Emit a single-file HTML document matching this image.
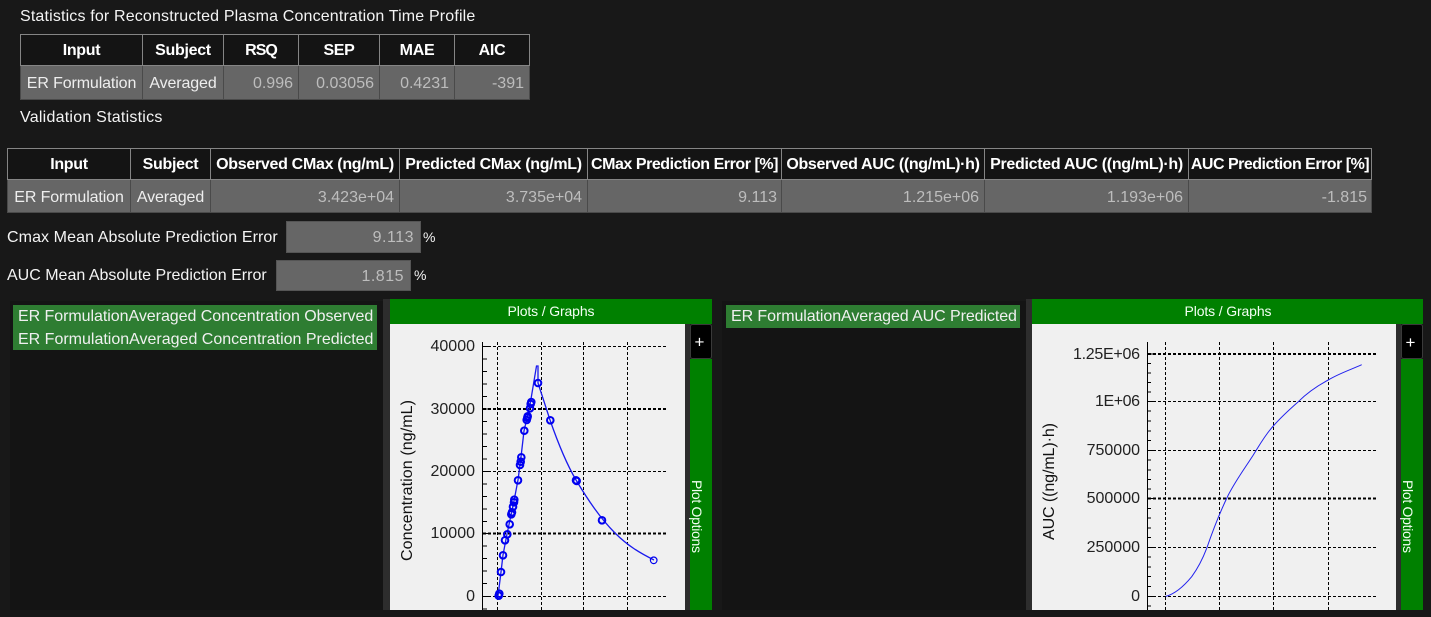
<!DOCTYPE html>
<html><head><meta charset="utf-8"><title>Statistics</title>
<style>
html,body{margin:0;padding:0;background:#181818;}
body{width:1431px;height:617px;position:relative;overflow:hidden;font-family:"Liberation Sans",sans-serif;font-size:16px;color:#f4f4f4;}
.l{position:absolute;white-space:nowrap;line-height:20px;}
table{position:absolute;border-collapse:separate;border-spacing:0;table-layout:fixed;}
th{background:#141414;color:#fff;font-weight:bold;border:1px solid #858585;border-left:0;padding:2px 0 0;box-sizing:border-box;height:32px;text-align:center;font-size:16px;letter-spacing:-.3px;white-space:nowrap;overflow:hidden;}
th:first-child{border-left:1px solid #858585;}
td{background:#666;border:1px solid #4a4a4a;border-top:0;border-left:0;padding:3px 5px 0 2px;box-sizing:border-box;text-align:right;color:#bdbdbd;font-size:16px;white-space:nowrap;overflow:hidden;}
td.t{text-align:center;color:#eee;padding:3px 0 0;letter-spacing:-.12px;}
td:first-child{border-left:1px solid #4a4a4a;}
.in{position:absolute;background:#666;border:1px solid #555;box-sizing:border-box;text-align:right;color:#bdbdbd;padding-right:6px;line-height:31px;letter-spacing:.5px;}
.sb{position:absolute;background:#141414;}
.strip{position:absolute;background:#2d2d2d;}
.li{position:absolute;background:#2e7d32;color:#f0f0f0;white-space:nowrap;padding-left:5px;line-height:24px;box-sizing:border-box;}
svg{position:absolute;left:0;top:0;}
</style></head><body>
<div class="l" style="left:20px;top:7px;letter-spacing:.16px;">Statistics for Reconstructed Plasma Concentration Time Profile</div>
<table style="left:20px;top:34px;width:510px;">
<colgroup><col style="width:123px"><col style="width:81px"><col style="width:75px"><col style="width:81px"><col style="width:75px"><col style="width:75px"></colgroup>
<tr><th>Input</th><th>Subject</th><th style="letter-spacing:-1px">RSQ</th><th>SEP</th><th>MAE</th><th>AIC</th></tr>
<tr style="height:34px"><td class="t">ER Formulation</td><td class="t">Averaged</td><td>0.996</td><td>0.03056</td><td>0.4231</td><td>-391</td></tr>
</table>
<div class="l" style="left:20px;top:108px;letter-spacing:.24px;">Validation Statistics</div>
<table style="left:7px;top:148px;width:1365px;">
<colgroup><col style="width:124px"><col style="width:80px"><col style="width:189px"><col style="width:188px"><col style="width:194px"><col style="width:203px"><col style="width:204px"><col style="width:183px"></colgroup>
<tr><th>Input</th><th>Subject</th><th>Observed CMax (ng/mL)</th><th>Predicted CMax (ng/mL)</th><th style="letter-spacing:-.45px">CMax Prediction Error [%]</th><th style="letter-spacing:-.33px">Observed AUC ((ng/mL)·h)</th><th>Predicted AUC ((ng/mL)·h)</th><th style="letter-spacing:-.5px">AUC Prediction Error [%]</th></tr>
<tr style="height:33px"><td class="t">ER Formulation</td><td class="t">Averaged</td><td>3.423e+04</td><td>3.735e+04</td><td style="padding-right:4px">9.113</td><td>1.215e+06</td><td>1.193e+06</td><td style="padding-right:4px">-1.815</td></tr>
</table>
<div class="l" style="left:7px;top:228px;letter-spacing:.09px;">Cmax Mean Absolute Prediction Error</div>
<div class="in" style="left:286px;top:221px;width:135px;height:32px;">9.113</div>
<div class="l" style="left:423px;top:227px;font-size:14px;">%</div>
<div class="l" style="left:7px;top:266px;">AUC Mean Absolute Prediction Error</div>
<div class="in" style="left:276px;top:260px;width:135px;height:31px;">1.815</div>
<div class="l" style="left:414px;top:265px;font-size:14px;">%</div>

<div class="sb" style="left:10px;top:301px;width:373px;height:309px;"></div>
<div class="strip" style="left:383px;top:299px;width:7px;height:311px;"></div>
<div class="li" style="left:13px;top:305px;width:364px;height:23px;letter-spacing:-.045px;">ER FormulationAveraged Concentration Observed</div>
<div class="li" style="left:13px;top:328px;width:364px;height:22px;">ER FormulationAveraged Concentration Predicted</div>
<div class="sb" style="left:722px;top:301px;width:304px;height:309px;"></div>
<div class="strip" style="left:1026px;top:299px;width:6px;height:311px;"></div>
<div class="li" style="left:726px;top:305px;width:294px;height:23px;letter-spacing:-.08px;">ER FormulationAveraged AUC Predicted</div>

<svg width="1431" height="617" viewBox="0 0 1431 617" font-family="'Liberation Sans',sans-serif">
<!-- left plot -->
<rect x="390" y="299" width="322" height="25" fill="#008000"/>
<rect x="390" y="324" width="295" height="286" fill="#f0f0f0"/>
<rect x="685" y="324" width="5" height="286" fill="#2d2d2d"/>
<rect x="690" y="359" width="22" height="251" fill="#008000"/>
<rect x="690.5" y="324.5" width="21" height="34" rx="2" fill="#000" stroke="#3a3a3a"/>
<text x="551" y="316" fill="#f2fff2" font-size="14" text-anchor="middle" textLength="87">Plots / Graphs</text>
<text x="699.5" y="347.5" fill="#fff" font-size="17" text-anchor="middle">+</text>
<text transform="translate(692,480) rotate(90)" fill="#f2fff2" font-size="14" textLength="73">Plot Options</text>
<g stroke="#000" stroke-width="1" stroke-dasharray="3 2" fill="none">
<path d="M497.5 342V610M541.5 342V610M583.5 342V610M627.5 342V610M483 346.5H668M483 471.5H668M483 596.5H668"/>
<path stroke-width="2" d="M483 409H668M483 533.5H668"/>
</g>
<path stroke="#000" fill="none" d="M482.5 342V610M483 346.5h5M483 359h4M483 371.5h4M483 384h4M483 396.5h4M483 409h5M483 421.5h4M483 434h4M483 446.5h4M483 459h4M483 471.5h5M483 484h4M483 496.5h4M483 509h4M483 521.5h4M483 533.5h5M483 546h4M483 558.5h4M483 571h4M483 583.5h4M483 596.5h5M483 609h4"/>
<g fill="#222" font-size="16" text-anchor="end">
<text x="475" y="351">40000</text><text x="475" y="414">30000</text><text x="475" y="476">20000</text><text x="475" y="538">10000</text><text x="475" y="601">0</text>
</g>
<text transform="translate(412,561) rotate(-90)" fill="#111" font-size="16" textLength="161">Concentration (ng/mL)</text>
<path fill="none" stroke="#1a1aee" stroke-width="1.3" d="M498 596L501 572L503 555L507 534L514 501L518 480L521 457L524 431L530 405L536.5 366L538 366L538 383L550 420C558 443 566 463 576 480C588 500 600 518 615 533C628 546 640 553 654 560"/>
<g fill="none" stroke="#0000f0" stroke-width="2">
<circle cx="498.7" cy="595.7" r="3.3"/><circle cx="499.3" cy="593.7" r="3.3"/><circle cx="501" cy="572" r="3.3"/><circle cx="503" cy="555.3" r="3.3"/><circle cx="505" cy="540.3" r="3.3"/><circle cx="507.3" cy="534.3" r="3.3"/><circle cx="509.7" cy="524.3" r="3.3"/><circle cx="511.3" cy="514.3" r="3.3"/><circle cx="512" cy="512.3" r="3.3"/><circle cx="513" cy="506.7" r="3.3"/><circle cx="514" cy="502.3" r="3.3"/><circle cx="514.3" cy="499.7" r="3.3"/><circle cx="518" cy="480.3" r="3.3"/><circle cx="520" cy="465" r="3.3"/><circle cx="520.7" cy="461.7" r="3.3"/><circle cx="521.3" cy="457.3" r="3.3"/><circle cx="524.3" cy="430.7" r="3.3"/><circle cx="526.7" cy="420" r="3.3"/><circle cx="527.3" cy="417.7" r="3.3"/><circle cx="527.7" cy="416.3" r="3.3"/><circle cx="530" cy="408.3" r="3.3"/><circle cx="530.7" cy="404" r="3.3"/><circle cx="531.3" cy="402" r="3.3"/><circle cx="538" cy="383" r="3.3"/><circle cx="550.3" cy="420.3" r="3.3"/><circle cx="576" cy="480.3" r="3.3"/><circle cx="576.7" cy="481" r="3.3"/><circle cx="602" cy="520.3" r="3.3"/>
</g>
<circle cx="653.7" cy="560.3" r="3.3" fill="none" stroke="#0000f0" stroke-width="1.2"/>
<!-- right plot -->
<rect x="1032" y="299" width="391" height="25" fill="#008000"/>
<rect x="1032" y="324" width="364" height="286" fill="#f0f0f0"/>
<rect x="1396" y="324" width="5" height="286" fill="#2d2d2d"/>
<rect x="1401" y="359" width="22" height="251" fill="#008000"/>
<rect x="1401.5" y="324.5" width="21" height="34" rx="2" fill="#000" stroke="#3a3a3a"/>
<text x="1228" y="316" fill="#f2fff2" font-size="14" text-anchor="middle" textLength="87">Plots / Graphs</text>
<text x="1410.5" y="348" fill="#fff" font-size="17" text-anchor="middle">+</text>
<text transform="translate(1403,480) rotate(90)" fill="#f2fff2" font-size="14" textLength="73">Plot Options</text>
<g stroke="#000" stroke-width="1" stroke-dasharray="3 2" fill="none">
<path d="M1165.5 342V610M1219.5 342V610M1273.5 342V610M1328.5 342V610M1148 401.5H1378M1148 450.5H1378M1148 547.5H1378M1148 596.5H1378"/>
<path stroke-width="2" d="M1148 354H1378M1148 498.5H1378"/>
</g>
<path stroke="#000" fill="none" d="M1147.5 342V610M1148 354h5M1148 363.5h3M1148 373h3M1148 382.5h3M1148 392h3M1148 401.5h5M1148 411h3M1148 421h3M1148 431h3M1148 440.5h3M1148 450.5h5M1148 460h3M1148 470h3M1148 479.5h3M1148 489h3M1148 498.5h5M1148 508.5h3M1148 518h3M1148 528h3M1148 537.5h3M1148 547.5h5M1148 557h3M1148 567h3M1148 576.5h3M1148 586.5h3M1148 596.5h5M1148 606h3"/>
<g fill="#222" font-size="16" text-anchor="end">
<text x="1140" y="359" textLength="67">1.25E+06</text><text x="1140" y="406" textLength="45">1E+06</text><text x="1140" y="455">750000</text><text x="1140" y="503">500000</text><text x="1140" y="552">250000</text><text x="1140" y="601">0</text>
</g>
<text transform="translate(1054,540) rotate(-90)" fill="#111" font-size="16" textLength="117">AUC ((ng/mL)·h)</text>
<path fill="none" stroke="#2222ee" stroke-width="1" d="M1165.7 596.4C1175 594 1184 586 1191.7 576.7C1198 568 1203 558 1206.7 548.3C1213 530 1220 512 1228.3 495C1236 480 1245 468 1253.3 455C1259 446 1265 435 1273.3 426C1281 417 1290 409 1298.3 401.7C1307 393 1317 386 1328.3 380C1338 374 1350 370 1361.7 364.7"/>
</svg>
</body></html>
